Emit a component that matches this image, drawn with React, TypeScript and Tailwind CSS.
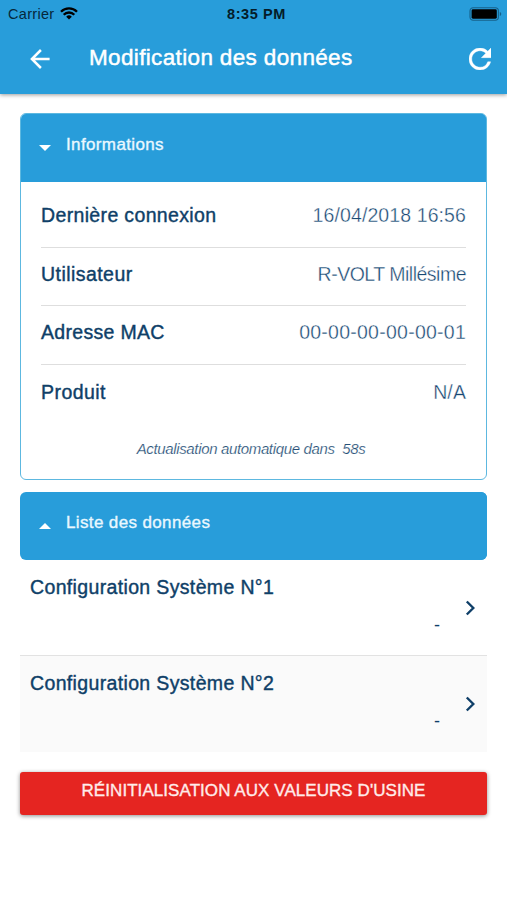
const infoRows = [
  { label: "Dernière connexion", value: "16/04/2018 16:56", labelClass: "tracking-[0.350px]", valueClass: "tracking-[0.100px]" },
  { label: "Utilisateur", value: "R-VOLT Millésime", labelClass: "tracking-[0.450px]", valueClass: "tracking-[-0.500px]" },
  { label: "Adresse MAC", value: "00-00-00-00-00-01", labelClass: "tracking-[0.310px]", valueClass: "tracking-[0.250px]" },
  { label: "Produit", value: "N/A", labelClass: "tracking-[0.450px]", valueClass: "tracking-[0.1px]" },
];

const configItems = [
  { title: "Configuration Système N°1", value: "-", className: "bg-white border-b border-[#e2e2e2]" },
  { title: "Configuration Système N°2", value: "-", className: "bg-[#fafafa]" },
];

const WifiIcon = () => (
  <svg className="w-[18px] h-[13px] ml-[6px] mb-[2px]" viewBox="0 0 18 13" fill="none" stroke="#000" strokeWidth="2.3">
    <path d="M1 4.7a11.3 11.3 0 0 1 16 0" />
    <path d="M3.7 7.7a7.5 7.5 0 0 1 10.6 0" />
    <path d="M9 12.4 6.2 9.7a4 4 0 0 1 5.6 0z" fill="#000" stroke="none" />
  </svg>
);

const BatteryIcon = () => (
  <svg className="w-[33px] h-[14px]" viewBox="0 0 33 14">
    <rect x="1" y="0.7" width="28.4" height="12.6" rx="3.2" fill="none" stroke="#17618a" strokeWidth="1.1" />
    <rect x="2.6" y="2.3" width="25.2" height="9.4" rx="1.4" fill="#000" />
    <path d="M30.8 5v4c.9-.3 1.4-1.1 1.4-2s-.5-1.7-1.4-2z" fill="#17618a" />
  </svg>
);

const BackIcon = () => (
  <svg className="w-5 h-5" viewBox="0 0 20 20" fill="none" stroke="#fff" strokeWidth="2.5">
    <path d="M19.6 10H1.8M10.9 1 1.9 10l9 9" />
  </svg>
);

const RefreshIcon = () => (
  <svg className="w-[22px] h-[22px]" viewBox="4 4 16 16">
    <path
      fill="#fff"
      stroke="#fff"
      strokeWidth="0.3"
      d="M17.65 6.35A7.958 7.958 0 0 0 12 4c-4.42 0-7.99 3.58-7.99 8s3.57 8 7.99 8c3.73 0 6.84-2.55 7.73-6h-2.08A5.99 5.99 0 0 1 12 18c-3.31 0-6-2.69-6-6s2.69-6 6-6c1.66 0 3.14.69 4.22 1.78L13 11h7V4l-2.35 2.35z"
    />
  </svg>
);

const ChevronIcon = () => (
  <svg className="w-[10px] h-[16px]" viewBox="0 0 10 16" fill="none" stroke="#0f3f68" strokeWidth="2.4">
    <path d="M1.8 1.5 8.300 8l-6.5 6.5" />
  </svg>
);

const SectionHeader = ({ title, open }: { title: string; open: boolean }) => (
  <div className="h-[68px] flex items-center bg-[#289dda]">
    <svg className="w-3 h-[6px]" viewBox="0 0 12 6">
      <path d={open ? "M0 0h12L6 6z" : "M0 6h12L6 0z"} fill="#fff" />
    </svg>
    <h2 className="ml-[15px] pb-[6px] text-[17px] leading-5 text-[#eaf8ff] tracking-[0.370px] [-webkit-text-stroke:0.350px_#eaf8ff]">
      {title}
    </h2>
  </div>
);

const App = () => {
  return (
    <div className="w-full h-[900px] overflow-hidden bg-white text-[#0f3f68] font-['Liberation_Sans',Arial,sans-serif] whitespace-nowrap">
      <header className="h-[94px] bg-[#289dda] shadow-[0_1px_4px_rgba(0,0,0,0.4)]">
        <div className="h-[28px] pl-[8px] pr-[5px] grid grid-cols-3 items-center text-black">
          <div className="flex items-center">
            <span className="text-[14.500px] leading-4 tracking-[0.300px] text-[#06283b]">Carrier</span>
            <WifiIcon />
          </div>
          <span className="pl-[3px] text-center text-[14.500px] leading-4 font-bold tracking-[0.600px] text-[#041c29]">8:35 PM</span>
          <div className="flex justify-end pb-px">
            <BatteryIcon />
          </div>
        </div>
        <div className="h-[62px] pl-[30px] pr-[16px] flex items-center">
          <BackIcon />
          <h1 className="ml-[39px] pb-[3px] flex-1 text-[22.500px] leading-7 tracking-[0.350px] text-white [-webkit-text-stroke:0.450px_#fff]">
            Modification des données
          </h1>
          <RefreshIcon />
        </div>
      </header>

      <main className="px-5 pt-[19px]">
        <section className="h-[367px] rounded-md overflow-hidden border border-[#5db8e0]">
          <div className="pl-[18px] bg-[#289dda]">
            <SectionHeader title="Informations" open />
          </div>
          <div className="px-[20px] pt-[7px]">
            {infoRows.map((row, index) => (
              <div
                key={row.label}
                className={`h-[58.600px] pb-[5px] flex items-center justify-between text-[19.500px] leading-6 ${
                  index < infoRows.length - 1 ? "border-b border-[#dedede]" : ""
                }`}
              >
                <span className={`[-webkit-text-stroke:0.400px_#0f3f68] ${row.labelClass}`}>{row.label}</span>
                <span className={`text-[#174873] [-webkit-text-stroke:0.350px_#fff] ${row.valueClass}`}>{row.value}</span>
              </div>
            ))}
            <p className="mt-[16px] pr-[5px] text-center text-[15px] leading-5 italic tracking-[-0.350px] text-[#264f76] [-webkit-text-stroke:0.200px_#fff]">
              Actualisation automatique dans&nbsp; 58s
            </p>
          </div>
        </section>

        <section className="mt-3">
          <div className="pl-[19px] rounded-md overflow-hidden bg-[#289dda]">
            <SectionHeader title="Liste des données" open={false} />
          </div>
          {configItems.map((item) => (
            <div key={item.title} className={`h-[96px] pl-[10px] pr-[12px] flex items-center ${item.className}`}>
              <div className="flex-1 h-full pt-[15px] flex flex-col">
                <h3 className="text-[19.500px] leading-6 tracking-[0.350px] [-webkit-text-stroke:0.400px_#0f3f68]">{item.title}</h3>
                <span className="mt-[14px] pr-[25px] text-right text-[18px] leading-6">{item.value}</span>
              </div>
              <ChevronIcon />
            </div>
          ))}
        </section>

        <button className="mt-[20px] w-full h-[43px] pb-[6px] flex items-center justify-center rounded-[3px] bg-[#e52521] shadow-[0_1px_4px_rgba(0,0,0,0.45)] text-[17px] tracking-[0.060px] text-[#ffecea] [-webkit-text-stroke:0.350px_#ffecea]">
          RÉINITIALISATION AUX VALEURS D'USINE
        </button>
      </main>
    </div>
  );
};

export default App;
